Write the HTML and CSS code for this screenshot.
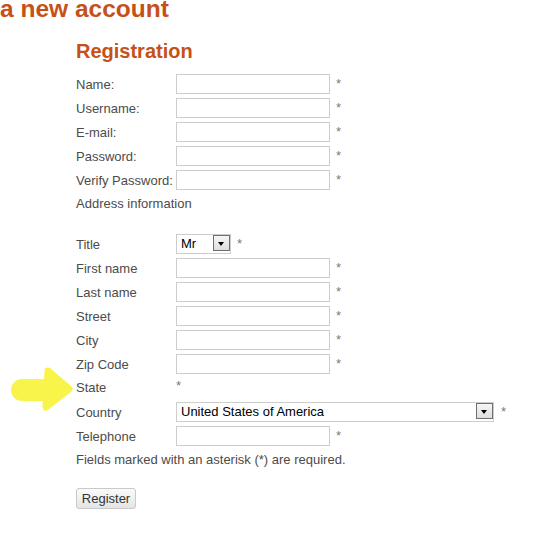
FILE: index.html
```html
<!DOCTYPE html>
<html>
<head>
<meta charset="utf-8">
<link rel="stylesheet" href="styles.css">
</head>
<body>
<h1 class="page-title">a new account</h1>
<div class="content">
  <h2 class="section-title">Registration</h2>
  <form class="form">
    <div class="row"><label class="lbl">Name:</label><input class="txt" type="text"><span class="req">*</span></div>
    <div class="row"><label class="lbl">Username:</label><input class="txt" type="text"><span class="req">*</span></div>
    <div class="row"><label class="lbl">E-mail:</label><input class="txt" type="text"><span class="req">*</span></div>
    <div class="row"><label class="lbl">Password:</label><input class="txt" type="password"><span class="req">*</span></div>
    <div class="row"><label class="lbl">Verify Password:</label><input class="txt" type="password"><span class="req">*</span></div>
    <div class="row row-plain row-section"><span class="lbl lbl-plain">Address information</span></div>
    <div class="row"><label class="lbl">Title</label>
      <span class="sel sel-title"><select class="sel-box"><option>Mr</option></select><span class="sel-btn"></span></span><span class="req">*</span></div>
    <div class="row"><label class="lbl">First name</label><input class="txt" type="text"><span class="req">*</span></div>
    <div class="row"><label class="lbl">Last name</label><input class="txt" type="text"><span class="req">*</span></div>
    <div class="row"><label class="lbl">Street</label><input class="txt" type="text"><span class="req">*</span></div>
    <div class="row"><label class="lbl">City</label><input class="txt" type="text"><span class="req">*</span></div>
    <div class="row"><label class="lbl">Zip Code</label><input class="txt" type="text"><span class="req">*</span></div>
    <div class="row row-plain"><span class="lbl lbl-plain">State</span><span class="req req-state">*</span></div>
    <div class="row"><label class="lbl">Country</label>
      <span class="sel sel-country"><select class="sel-box"><option>United States of America</option></select><span class="sel-btn"></span></span><span class="req req-wide">*</span></div>
    <div class="row"><label class="lbl">Telephone</label><input class="txt" type="text"><span class="req">*</span></div>
    <div class="row row-plain"><span class="lbl-plain note">Fields marked with an asterisk (*) are required.</span></div>
    <div class="actions"><button class="btn" type="button">Register</button></div>
  </form>
</div>
<svg class="marker" width="80" height="50" viewBox="0 365 80 50" aria-hidden="true">
  <line x1="22" y1="390" x2="50" y2="390" stroke="#f8f44a" stroke-width="22" stroke-linecap="round"/>
  <polygon points="48,371 69,389 46,407" fill="#f8f44a" stroke="#f8f44a" stroke-width="7" stroke-linejoin="round"/>
</svg>
</body>
</html>
```

FILE: styles.css
```css
html, body {
  margin: 0;
  padding: 0;
  background: #ffffff;
}
body {
  font-family: "Liberation Sans", Arial, sans-serif;
  position: relative;
  width: 540px;
  height: 540px;
  overflow: hidden;
}
.page-title {
  margin: 0;
  font-size: 24.5px;
  line-height: 18px;
  font-weight: bold;
  color: #c65118;
  white-space: nowrap;
}
.content {
  padding-left: 76px;
}
.section-title {
  margin: 21px 0 11px 0;
  font-size: 20px;
  line-height: 24px;
  font-weight: bold;
  color: #c65118;
}
.form {
  margin: 0;
}
.row {
  display: flex;
  align-items: flex-start;
  height: 20px;
  margin-bottom: 4px;
}
.row-section {
  margin-bottom: 20px;
}
.lbl {
  width: 100px;
  flex: none;
  font-size: 13px;
  line-height: 20px;
  padding-top: 1px;
  color: #4b4b4b;
  white-space: nowrap;
}
.lbl-plain {
  padding-top: 0;
  font-size: 13px;
  line-height: 20px;
  color: #4b4b4b;
}
.note {
  white-space: nowrap;
}
.txt {
  box-sizing: border-box;
  width: 154px;
  height: 20px;
  margin: 0;
  padding: 0 3px;
  border: 1px solid #cdcdcd;
  background: #ffffff;
  font-family: "Liberation Sans", Arial, sans-serif;
  font-size: 13px;
  outline: none;
}
.req {
  margin-left: 6px;
  font-size: 13px;
  line-height: 20px;
  color: #7a7a7a;
}
.req-state {
  margin-left: 0;
  line-height: 16px;
}
.req-wide {
  margin-left: 7px;
}
.sel {
  position: relative;
  display: block;
  height: 20px;
  box-sizing: border-box;
}
.sel-title {
  width: 55px;
}
.sel-country {
  width: 318px;
}
.sel-box {
  -webkit-appearance: none;
  appearance: none;
  box-sizing: border-box;
  width: 100%;
  height: 20px;
  margin: 0;
  padding: 0 0 0 4px;
  border: 1px solid #cdcdcd;
  border-radius: 0;
  background: #ffffff;
  font-family: "Liberation Sans", Arial, sans-serif;
  font-size: 13px;
  line-height: 18px;
  color: #000000;
  outline: none;
}
.sel-btn {
  position: absolute;
  top: 1px;
  right: 1px;
  width: 17px;
  height: 16px;
  box-sizing: border-box;
  border: 1px solid #6f6f6f;
  background: linear-gradient(#f6f6f6, #dedede);
  pointer-events: none;
}
.sel-btn::after {
  content: "";
  position: absolute;
  left: 4px;
  top: 6px;
  border-left: 3.5px solid transparent;
  border-right: 3.5px solid transparent;
  border-top: 4px solid #000000;
}
.actions {
  margin-top: 18px;
}
.btn {
  box-sizing: border-box;
  width: 60px;
  height: 21px;
  margin: 0;
  padding: 0;
  border: 1px solid #c9c9c9;
  border-radius: 3px;
  background: linear-gradient(#fbfbfb, #e4e4e4);
  font-family: "Liberation Sans", Arial, sans-serif;
  font-size: 13px;
  color: #333333;
}
.marker {
  position: absolute;
  left: 0;
  top: 365px;
}
```
